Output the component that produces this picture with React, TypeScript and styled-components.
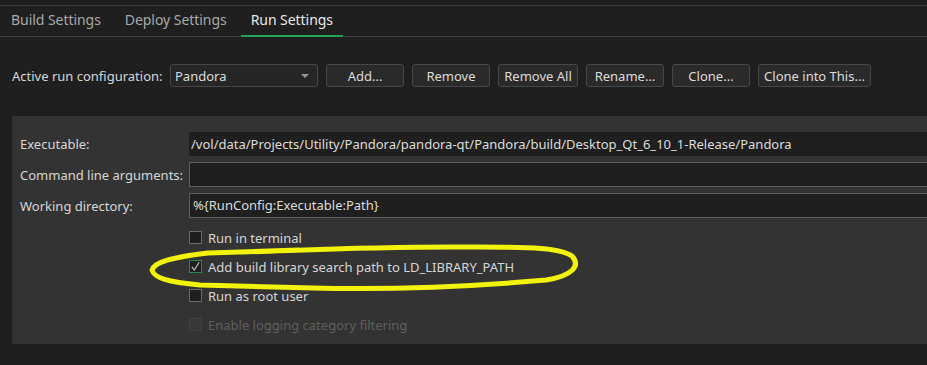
import styled, { createGlobalStyle } from 'styled-components';

const GlobalStyle = createGlobalStyle`
  html, body {
    margin: 0;
    padding: 0;
    background: #1f1f1f;
    overflow: hidden;
  }
  body {
    font-family: "Noto Sans", "Open Sans", sans-serif;
    font-size: 13px;
    color: #d6d6d6;
  }
`

const tabs = ['Build Settings', 'Deploy Settings', 'Run Settings']
const buttons = [
  { label: 'Add...', width: 78 },
  { label: 'Remove', width: 78 },
  { label: 'Remove All', width: 80 },
  { label: 'Rename...', width: 78 },
  { label: 'Clone...', width: 78 },
  { label: 'Clone into This...', width: 113 },
]
const checks = [
  { label: 'Run in terminal', checked: false, disabled: false },
  { label: 'Add build library search path to LD_LIBRARY_PATH', checked: true, disabled: false },
  { label: 'Run as root user', checked: false, disabled: false },
  { label: 'Enable logging category filtering', checked: false, disabled: true },
]

export default function App() {
  return (
    <Page>
      <GlobalStyle />
      <TopStrip />
      <TabBar>
        {tabs.map((t, i) => (
          <Tab key={t} $active={i === 2}>{t}</Tab>
        ))}
      </TabBar>
      <ConfigRow>
        <RowLabel>Active run configuration:</RowLabel>
        <Combo>
          <span>Pandora</span>
          <Arrow />
        </Combo>
        {buttons.map(b => (
          <Button key={b.label} $width={b.width}>{b.label}</Button>
        ))}
      </ConfigRow>
      <Panel>
        <Form>
          <FieldLabel>Executable:</FieldLabel>
          <ReadOnly>/vol/data/Projects/Utility/Pandora/pandora-qt/Pandora/build/Desktop_Qt_6_10_1-Release/Pandora</ReadOnly>
          <FieldLabel>Command line arguments:</FieldLabel>
          <LineEdit />
          <FieldLabel>Working directory:</FieldLabel>
          <LineEdit>%{'{'}RunConfig:Executable:Path{'}'}</LineEdit>
        </Form>
        <Checks>
          {checks.map(c => (
            <CheckRow key={c.label} $disabled={c.disabled}>
              <Box $checked={c.checked} $disabled={c.disabled}>
                {c.checked && (
                  <svg width="11" height="11" viewBox="0 0 11 11">
                    <path d="M1.8 5.8 L4.3 9 L9.2 1.2" fill="none" stroke="#bdbdbd" strokeWidth="1.2" />
                  </svg>
                )}
              </Box>
              {c.label}
            </CheckRow>
          ))}
        </Checks>
        <Scribble width="440" height="56" viewBox="0 0 440 56">
          <path
            d="M95 8 C160 6 230 2 330 3 C385 3 412 4 424 12 C433 22 424 32 398 36 C330 42 250 46 165 44 C120 43 90 42 52 41 C20 38 6 34 4 26 C6 18 26 13 60 9 L150 6"
            fill="none"
            stroke="#f2f20a"
            strokeWidth="5"
            strokeLinecap="round"
            strokeLinejoin="round"
          />
        </Scribble>
      </Panel>
    </Page>
  )
}

const Page = styled.div`
  width: 927px;
  height: 365px;
  background: #1f1f1f;
`

const TopStrip = styled.div`
  height: 5px;
  border-bottom: 1px solid #3a3a3a;
`

const TabBar = styled.div`
  display: flex;
  gap: 4px;
  height: 30px;
  padding-left: 1px;
  border-bottom: 1px solid #3c3c3c;
`

const Tab = styled.div<{ $active: boolean }>`
  display: flex;
  align-items: center;
  padding: 0 10px 2px;
  color: ${p => (p.$active ? '#e8e8e8' : '#a8a8a8')};
  border-bottom: 2px solid ${p => (p.$active ? '#23a05a' : 'transparent')};
  margin-bottom: -1px;
  font-size: 14px;
  letter-spacing: -0.05px;
`

const ConfigRow = styled.div`
  display: flex;
  align-items: center;
  gap: 8px;
  height: 79px;
  padding-left: 12px;
  padding-bottom: 2px;
  box-sizing: border-box;
`

const RowLabel = styled.div`
  flex-shrink: 0;
  width: 150px;
  white-space: nowrap;
  color: #d6d6d6;
`

const Combo = styled.div`
  display: flex;
  align-items: center;
  justify-content: space-between;
  flex-shrink: 0;
  width: 148px;
  height: 23px;
  box-sizing: border-box;
  padding: 0 8px 0 4px;
  background: #262626;
  border: 1px solid #474747;
  border-radius: 3px;
  color: #dcdcdc;
`

const Arrow = styled.div`
  width: 0;
  height: 0;
  border-left: 4px solid transparent;
  border-right: 4px solid transparent;
  border-top: 4px solid #9a9a9a;
`

const Button = styled.div<{ $width: number }>`
  display: flex;
  align-items: center;
  justify-content: center;
  flex-shrink: 0;
  width: ${p => p.$width}px;
  height: 23px;
  box-sizing: border-box;
  background: #2a2a2a;
  border: 1px solid #474747;
  border-radius: 3px;
  color: #dcdcdc;
  white-space: nowrap;
`

const Panel = styled.div`
  position: relative;
  margin-left: 12px;
  height: 228px;
  box-sizing: border-box;
  padding: 16px 0 0 8px;
  background: #333333;
`

const Form = styled.div`
  display: grid;
  grid-template-columns: 169px 1fr;
  row-gap: 6px;
  align-items: center;
`

const FieldLabel = styled.div`
  color: #d6d6d6;
`

const ReadOnly = styled.div`
  height: 24px;
  line-height: 24px;
  padding-left: 2px;
  background: #1f1f1f;
  color: #dcdcdc;
  white-space: nowrap;
  overflow: hidden;
`

const LineEdit = styled.div`
  height: 25px;
  line-height: 23px;
  box-sizing: border-box;
  padding-left: 3px;
  background: #1f1f1f;
  border: 1px solid #5e5e5e;
  border-right: none;
  color: #dcdcdc;
  white-space: nowrap;
`

const Checks = styled.div`
  display: flex;
  flex-direction: column;
  gap: 10px;
  padding: 10px 0 0 169px;
`

const CheckRow = styled.div<{ $disabled: boolean }>`
  display: flex;
  align-items: center;
  gap: 6px;
  height: 19px;
  color: ${p => (p.$disabled ? '#5e5e5e' : '#d6d6d6')};
`

const Box = styled.div<{ $checked: boolean; $disabled: boolean }>`
  display: flex;
  align-items: center;
  justify-content: center;
  width: 13px;
  height: 13px;
  box-sizing: border-box;
  background: ${p => (p.$disabled ? '#383838' : '#1f1f1f')};
  border: 1px solid ${p => (p.$checked ? '#1e8a4c' : p.$disabled ? '#404040' : '#6a6a6a')};
`

const Scribble = styled.svg`
  position: absolute;
  left: 136px;
  top: 128px;
  pointer-events: none;
`
